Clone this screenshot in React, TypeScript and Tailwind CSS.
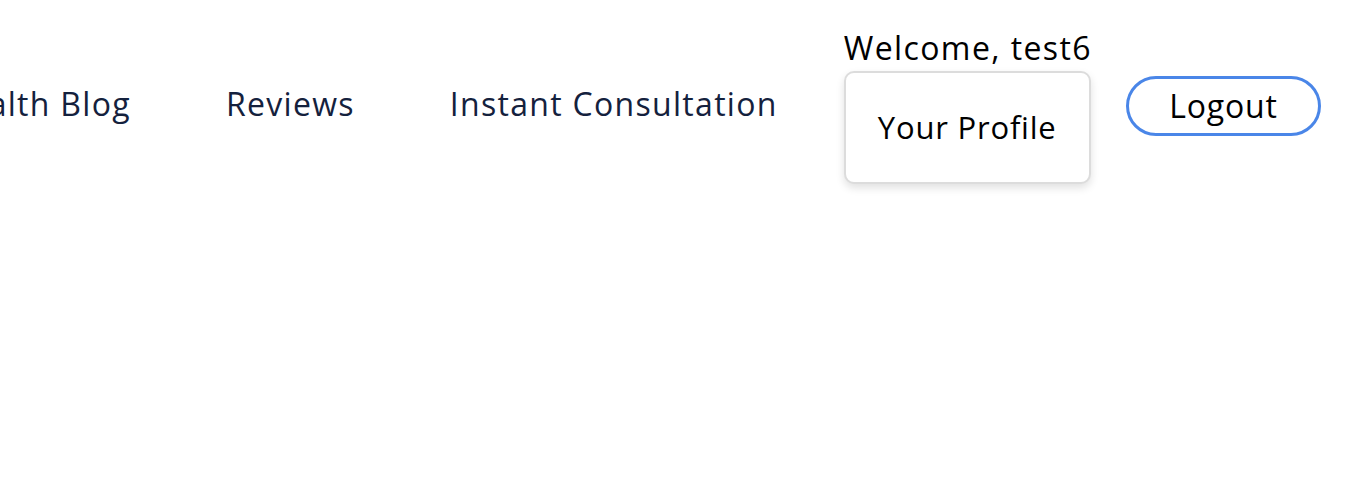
const links = ['Home', 'Appointments', 'Health Blog', 'Reviews', 'Instant Consultation'];

export default function App() {
    return (
        <div className="w-full h-[500px] bg-white overflow-hidden font-['Open_Sans',sans-serif]">
            <nav className="flex justify-end items-center h-[212px] pr-[43px]">
                <ul className="flex items-center gap-[95px] shrink-0 whitespace-nowrap pb-[4px]">
                    {links.map((l) => (
                        <li key={l} className="text-[32px] tracking-[1.3px] text-[#14213d] leading-none">
                            {l}
                        </li>
                    ))}
                </ul>
                <div className="flex flex-col shrink-0 ml-[66px]">
                    <span className="text-[32px] tracking-[1.4px] leading-[38px] text-black whitespace-nowrap">Welcome, test6</span>
                    <button className="mt-[4px] w-[247px] h-[113px] rounded-[10px] border-2 border-[#dcdcdc] bg-white shadow-[0_4px_8px_rgba(0,0,0,0.12)] text-[31px] tracking-[0.8px] text-black">
                        Your Profile
                    </button>
                </div>
                <button className="ml-[34px] shrink-0 w-[195px] h-[60px] rounded-full border-[3px] border-[#4a86e8] bg-white text-[32px] tracking-[0.8px] text-black">
                    Logout
                </button>
            </nav>
        </div>
    );
}
